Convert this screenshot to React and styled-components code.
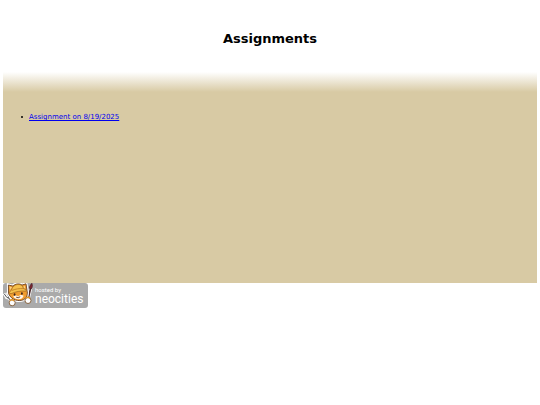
import React from "react";
import styled, { createGlobalStyle } from "styled-components";

const GlobalStyle = createGlobalStyle`
    body {
        margin : 0;
        background : #fff;
        font-family : "DejaVu Sans", Verdana, sans-serif;
    }
`;

const Page = styled.div`
    padding : 0 3px;
`;

const Header = styled.header`
    padding : 30px 0 24px;
    text-align : center;
`;

const Heading = styled.h1`
    margin : 0;
    font-size : 13px;
    line-height : 18px;
    color : #000;
`;

const Content = styled.main`
    min-height : 211px;
    box-sizing : border-box;
    padding : 40px 0 0 18px;
    background : linear-gradient(#fff, #d8caa4 20px);
`;

const List = styled.ul`
    margin : 0;
    padding : 0;
    list-style : none;
    font-size : 7px;
    line-height : 10px;
`;

const Item = styled.li`
    display : flex;
    align-items : center;
    gap : 6px;

    &::before {
        content : "";
        width : 2px;
        height : 2px;
        border-radius : 1px;
        background : #000;
    }
`;

const Link = styled.a`
    color : #0000ee;
`;

const Badge = styled.a`
    display : block;
    width : 85px;
`;

const BadgeImage = styled.svg`
    display : block;
`;

const assignments = [
    { name: "Assignment on 8/19/2025", href: "#assignment-8-19-2025" },
];

function NeocitiesLogo(){
    return(
        <BadgeImage width="85" height="25" viewBox="0 0 85 25" role="img" aria-label="hosted by neocities">
            <rect width="85" height="25" rx="3" fill="#aaaaaa" />
            {/* brush */}
            <path d="M27.7 4.8 25.2 15.5" stroke="#fff" strokeWidth="3.2" />
            <path d="M27.7 4.8 25.2 15.5" stroke="#4d2a2a" strokeWidth="1.7" />
            <path d="M26.7 5.5C26.3 3.5 27.6 1.8 28.8.4c.7 2.2.5 4-.6 5.4z" fill="#8c2732" stroke="#51242a" strokeWidth="1" />
            {/* fork */}
            <path d="m1 10.5 2.6 4.2 2.4.5M4.4 9.5l1.5 5.5 2 3.4" fill="none" stroke="#fff" strokeWidth="2.8" />
            <path d="m1.2 10.8 2.6 3.6 2.2.8M4.4 10l1.5 5 2 3.4" fill="none" stroke="#555" strokeWidth="1" />
            {/* head */}
            <path d="M5.5 10.6 5.4 2 10 3.1c2.2-2.4 6.5-3 9-1l4-1.3 1 6.5c1 4-.2 7.4-3.2 9.3-4.9 2.1-12 1-15.3-6z" fill="#f09c2f" stroke="#fff" strokeWidth="3" />
            <path d="M5.5 10.6 5.4 2 10 3.1c2.2-2.4 6.5-3 9-1l4-1.3 1 6.5c1 4-.2 7.4-3.2 9.3-4.9 2.1-12 1-15.3-6z" fill="#f09c2f" stroke="#69401f" strokeWidth=".9" />
            <path d="m6.5 3.4 2.7 1-2.2 2.4zM22 2.8l-2 1.3 2.1 2z" fill="#f9d287" />
            {/* cap */}
            <path d="M8.4 7c.9-3.2 3.2-5.4 6.5-5.6 3.1-.2 5 1.4 5.6 4.3l2.6.8.1 1.7c-5.4-.6-10.8.4-15.2 2.6L6 9.8z" fill="#f5c04c" stroke="#9b651f" strokeWidth=".7" />
            <path d="M9 7.4c3.7-1.5 7.1-2 11-1.8" fill="none" stroke="#bc7b24" strokeWidth=".8" />
            {/* muzzle, eyes and mouth */}
            <path d="M10.2 13.4c1.8-1.3 3.7-.8 5 .2 1.2-1.5 3.7-2.1 5.4-.8-.6 2.5-2.5 3.4-5 3.4-2.4 0-4.3-1-5.4-2.8z" fill="#fff5e9" />
            <ellipse cx="11.6" cy="11.5" rx=".9" ry="1.2" fill="#3b241d" />
            <ellipse cx="18.9" cy="10.5" rx=".9" ry="1.2" fill="#3b241d" />
            <path d="m13.2 14.2 2 .6 2-1.1" fill="none" stroke="#50352a" strokeWidth=".9" />
            {/* paws */}
            <circle cx="9.2" cy="19.8" r="3" fill="#fff" stroke="#815a34" strokeWidth=".9" />
            <circle cx="25" cy="17.5" r="3" fill="#fff" stroke="#815a34" strokeWidth=".9" />
            <path d="m6.8 17.6 2-1.1 2.4 1.4M22.8 15.1l2.1-1.1 2.2 1.4" fill="none" stroke="#e59728" strokeWidth="1.4" />
            <g fill="#fff" fontFamily="Roboto, sans-serif">
                <text x="32" y="9" fontSize="6">hosted by</text>
                <text x="32" y="20" fontSize="12">neocities</text>
            </g>
        </BadgeImage>
    )
}

export default function App(){
    return(
        <>
            <GlobalStyle />
            <Page>
                <Header>
                    <Heading>Assignments</Heading>
                </Header>
                <Content>
                    <List>
                        {assignments.map((item) => (
                            <Item key={item.href}>
                                <Link href={item.href}>{item.name}</Link>
                            </Item>
                        ))}
                    </List>
                </Content>
                <Badge href="#neocities">
                    <NeocitiesLogo />
                </Badge>
            </Page>
        </>
    )
}
